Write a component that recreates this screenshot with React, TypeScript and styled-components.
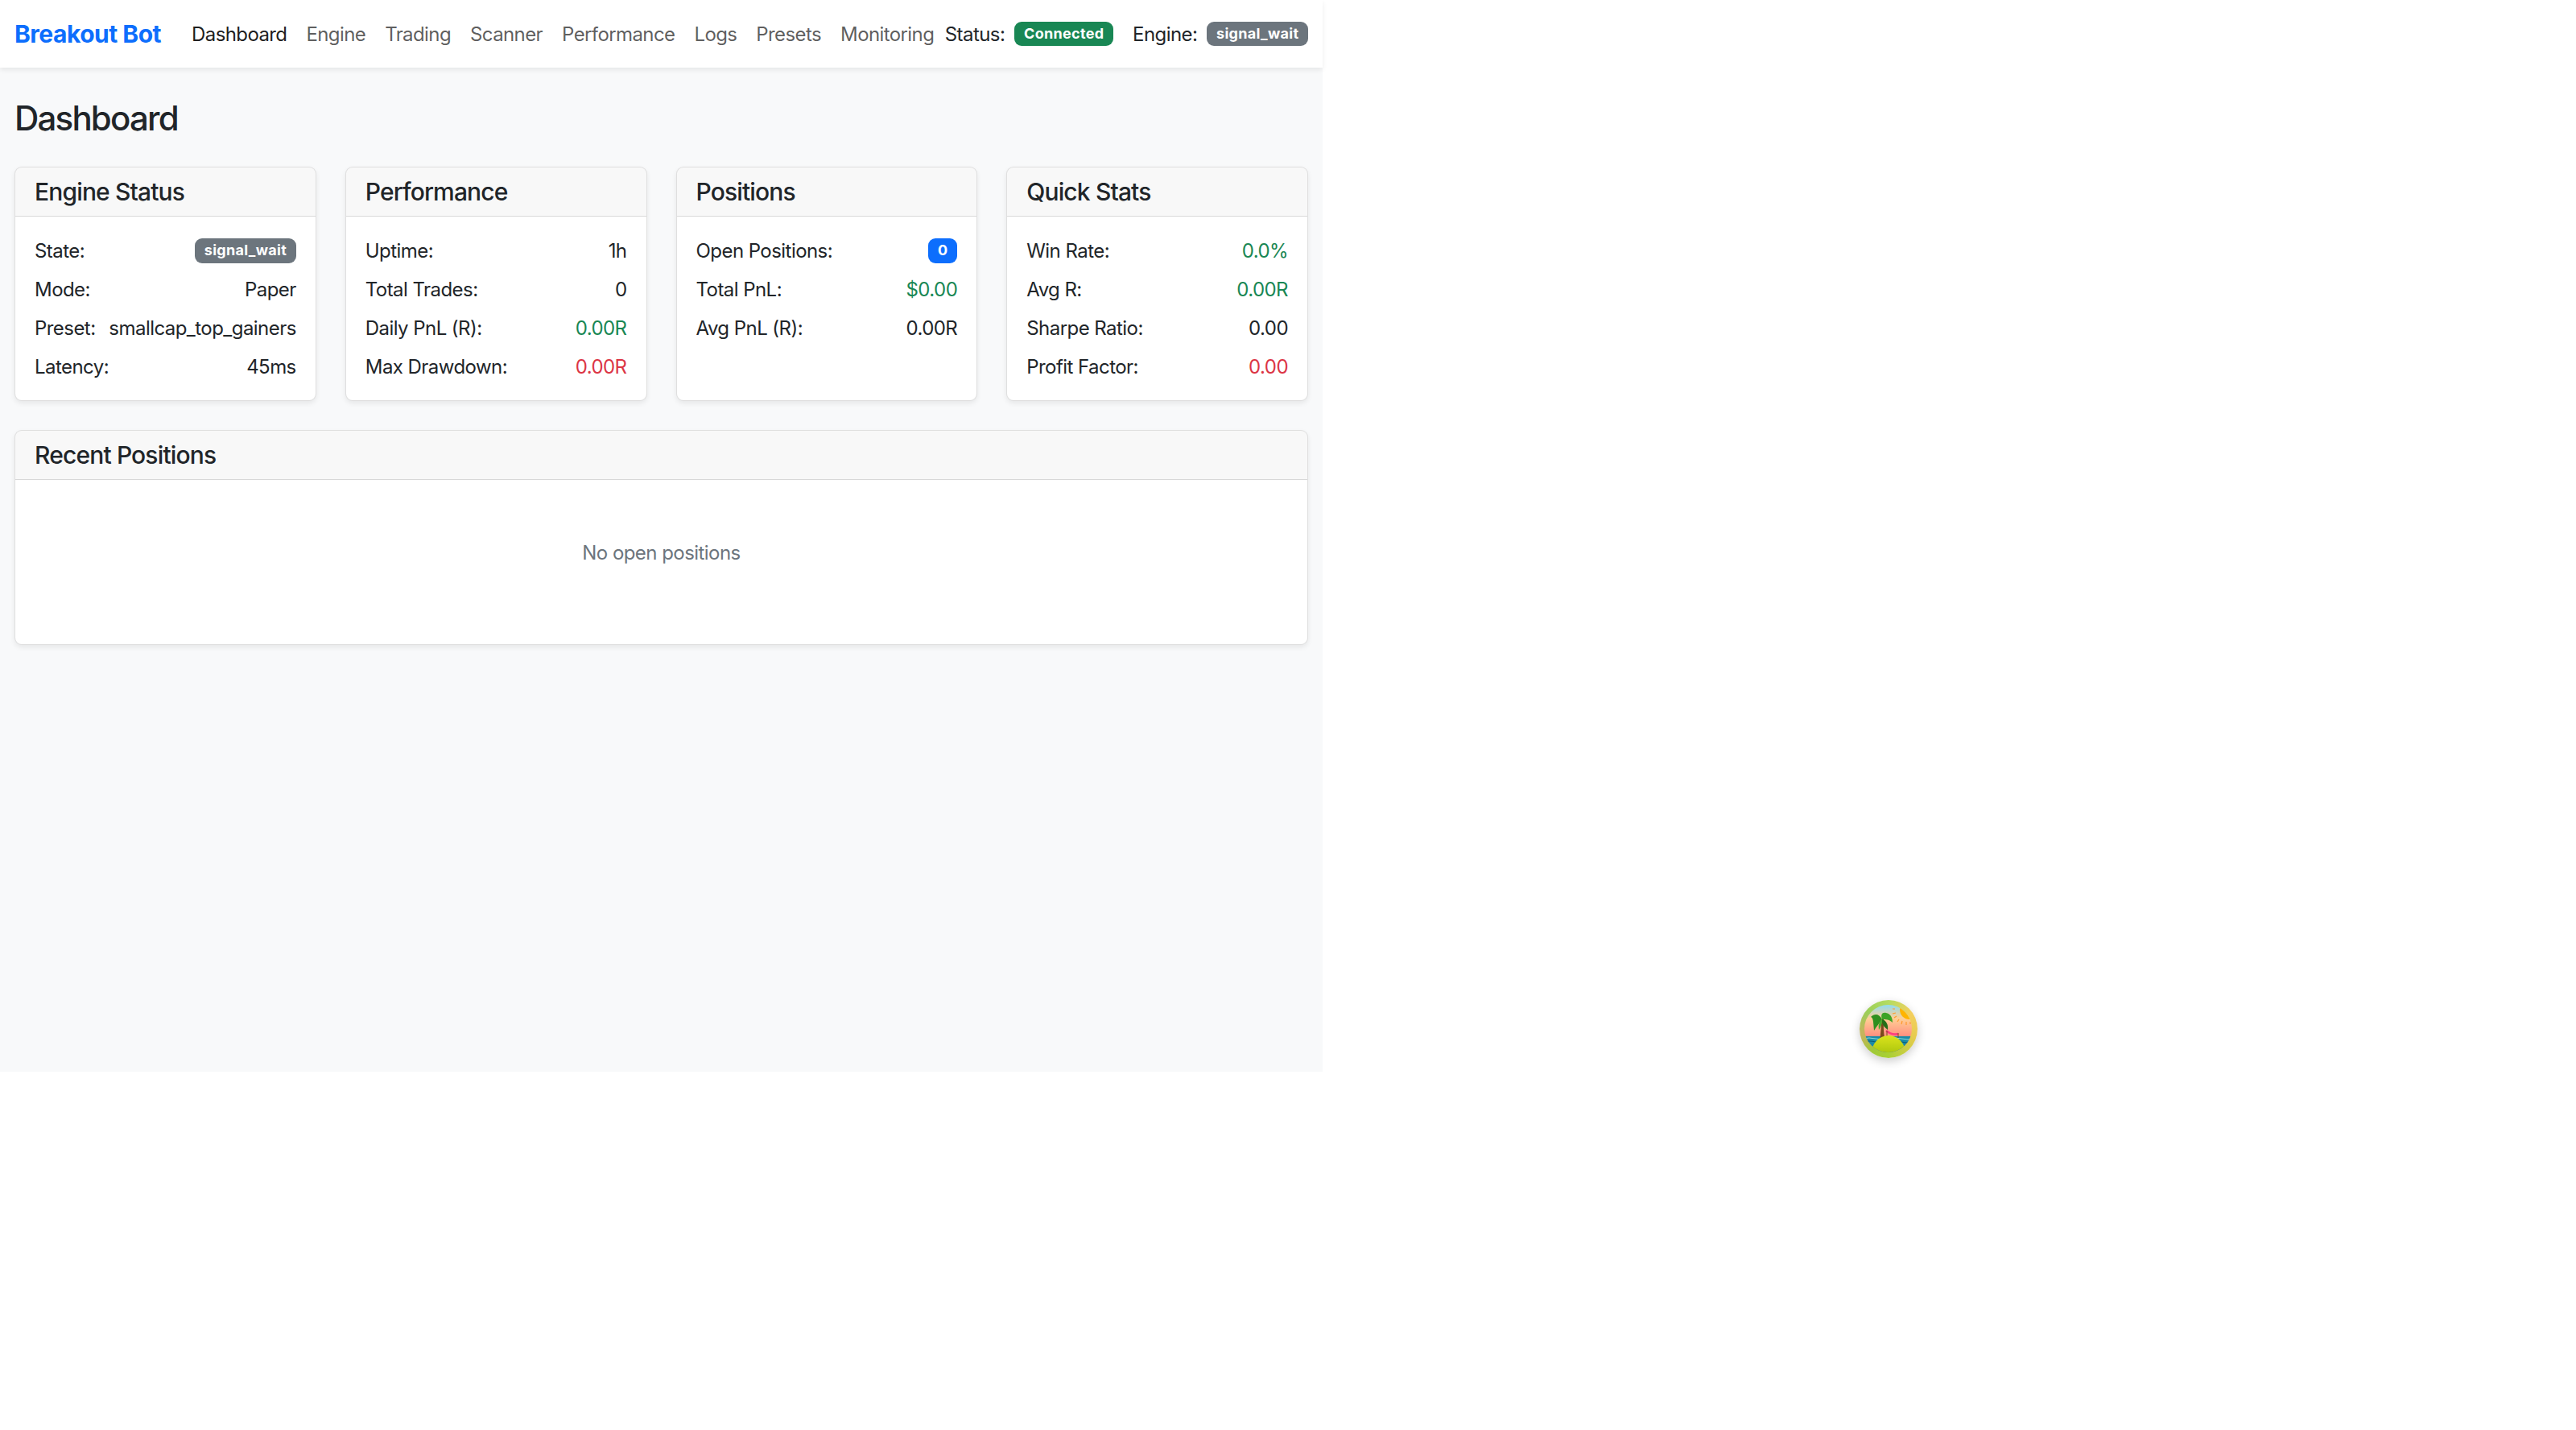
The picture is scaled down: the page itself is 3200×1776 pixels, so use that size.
import styled, { createGlobalStyle } from "styled-components";

const GlobalStyle = createGlobalStyle`
  html, body {
    margin: 0;
    padding: 0;
    background: #ffffff;
  }
  body {
    font-family: Inter, "Liberation Sans", sans-serif;
    font-size: 24px;
    line-height: 36px;
    letter-spacing: -0.55px;
    color: #212529;
  }
  * {
    box-sizing: border-box;
  }
`;

const Page = styled.div`
  width: 1643px;
  min-height: 1331px;
  background-color: #f8f9fa;
`;

const TopBar = styled.nav`
  height: 84px;
  display: flex;
  align-items: center;
  padding: 0 18px;
  background-color: #ffffff;
  box-shadow: 0 3px 6px rgba(0, 0, 0, 0.075);
`;

const Brand = styled.a`
  font-size: 30px;
  font-weight: 700;
  letter-spacing: -0.5px;
  color: #0d6efd;
  margin-right: 26px;
  white-space: nowrap;
`;

const NavLinks = styled.div`
  display: flex;
`;

const NavLink = styled.a<{ $active?: boolean }>`
  padding: 2px 12px 0;
  letter-spacing: -0.6px;
  white-space: nowrap;
  color: ${(p) => (p.$active ? "rgba(0, 0, 0, 0.9)" : "rgba(0, 0, 0, 0.65)")};
`;

const StatusArea = styled.div`
  margin-left: auto;
  display: flex;
  align-items: center;
`;

const StatusLabel = styled.span<{ $first?: boolean }>`
  padding-top: 2px;
  margin-right: 12px;
  margin-left: ${(p) => (p.$first ? "0" : "24px")};
  white-space: nowrap;
`;

const Badge = styled.span<{ $bg: string }>`
  display: inline-block;
  padding: 6.3px 11.7px;
  font-size: 18px;
  font-weight: 700;
  line-height: 18px;
  letter-spacing: 0.3px;
  color: #ffffff;
  white-space: nowrap;
  border-radius: 9px;
  background-color: ${(p) => p.$bg};
`;

const Main = styled.main`
  padding: 38px 18px 36px;
`;

const Title = styled.h3`
  margin: 0 0 35px;
  font-size: 42px;
  font-weight: 500;
  line-height: 50.4px;
  letter-spacing: -1.8px;
`;

const CardGrid = styled.div`
  display: grid;
  grid-template-columns: repeat(4, 1fr);
  gap: 36px;
  margin-bottom: 36px;
`;

const Card = styled.section`
  display: flex;
  flex-direction: column;
  background-color: #ffffff;
  border: 1.5px solid rgba(0, 0, 0, 0.125);
  border-radius: 9px;
  box-shadow: 0 3px 6px rgba(0, 0, 0, 0.075);
`;

const CardHeader = styled.h5`
  margin: 0;
  padding: 12px 24px;
  font-size: 30px;
  font-weight: 500;
  line-height: 36px;
  letter-spacing: -0.85px;
  background-color: rgba(33, 37, 41, 0.03);
  border-bottom: 1.5px solid rgba(0, 0, 0, 0.125);
  border-radius: 7.5px 7.5px 0 0;
`;

const CardBody = styled.div`
  flex: 1;
  padding: 24px;
  display: flex;
  flex-direction: column;
  gap: 12px;
`;

const Row = styled.div`
  display: flex;
  justify-content: space-between;
  align-items: center;
  height: 36px;
  white-space: nowrap;
`;

const Label = styled.span`
  padding-top: 2px;
`;

const Value = styled.span<{ $tone?: "success" | "danger" }>`
  padding-top: 2px;
  color: ${(p) =>
    p.$tone === "success" ? "#198754" : p.$tone === "danger" ? "#dc3545" : "inherit"};
`;

const EmptyText = styled.div`
  padding: 73px 24px 95px;
  text-align: center;
  color: #6c757d;
`;

const FloatingLogo = styled.div`
  position: fixed;
  left: 2310px;
  top: 1242px;
  width: 72px;
  height: 72px;
  border-radius: 50%;
  background: conic-gradient(
    #b4dc62,
    #f4cf5e 15%,
    #e6cb4e 30%,
    #a9d034 50%,
    #a0c938 60%,
    #c7b35e 72%,
    #9bcf58 86%,
    #b4dc62
  );
  box-shadow: 0 4px 12px rgba(0, 0, 0, 0.2);
`;

function IslandLogo() {
  return (
    <svg width="72" height="72" viewBox="0 0 72 72">
      <defs>
        <linearGradient id="sky" x1="0" y1="0" x2="0" y2="1">
          <stop offset="0.08" stopColor="#8fdcf0" />
          <stop offset="0.32" stopColor="#ffcf94" />
          <stop offset="0.62" stopColor="#ff9080" />
        </linearGradient>
        <linearGradient id="hill" x1="0" y1="0" x2="0" y2="1">
          <stop offset="0" stopColor="#dbe31c" />
          <stop offset="0.55" stopColor="#a8c40c" />
          <stop offset="1" stopColor="#3f8f0a" />
        </linearGradient>
        <clipPath id="inner">
          <circle cx="35.5" cy="35.5" r="29.5" />
        </clipPath>
      </defs>
      <g clipPath="url(#inner)">
        <rect x="0" y="0" width="72" height="72" fill="url(#sky)" />
        <circle cx="62" cy="12" r="12" fill="#ffb400" />
        <g stroke="#ff9a2e" strokeWidth="1.2">
          <path d="M44 11h-3M45 16l-4 1M46 20l-3 2M49 24l-2 3M53 26l-1 4M58 27v4M63 27v3" />
        </g>
        <rect x="0" y="45" width="72" height="27" fill="#1a8ba6" />
        <path d="M4 48q8-2 16 0t16 0 16 0 16 0" fill="none" stroke="#8fdcdc" strokeWidth="1" />
        <path d="M4 52q8-2 16 0t16 0 16 0 16 0" fill="none" stroke="#0c5a78" strokeWidth="1.2" />
        <path d="M25.5 47 C26.5 38 27 31 27.5 24 L30 24 C29.5 32 30 40 31 47 Z" fill="#7a4a1c" />
        <path d="M28 24 C24 16 18 17 14 21 C17 22 17 26 18 38 C21 33 25 28 28 24 Z" fill="#2f8f1f" />
        <path d="M28 24 C26 18 28 15 33 16 C38 17 41 21 41 28 C37 24 33 24 28 24 Z" fill="#3da326" />
        <path d="M28 24 C32 25 36 29 35 37 C31 34 27 30 28 24 Z" fill="#256f18" />
        <path d="M28 24 C24 27 23 31 24 37 C27 33 28 29 28 24 Z" fill="#46ad2c" />
        <path d="M33 38 Q40 44 48 42" stroke="#ff3d7f" strokeWidth="2.5" fill="none" />
        <path d="M34 38v8M48 41v6" stroke="#7a4a1c" strokeWidth="1" />
        <ellipse cx="36" cy="66" rx="21" ry="22" fill="url(#hill)" />
      </g>
    </svg>
  );
}

export default function App() {
  return (
    <Page>
      <GlobalStyle />
      <TopBar>
        <Brand>Breakout Bot</Brand>
        <NavLinks>
          <NavLink $active>Dashboard</NavLink>
          <NavLink>Engine</NavLink>
          <NavLink>Trading</NavLink>
          <NavLink>Scanner</NavLink>
          <NavLink>Performance</NavLink>
          <NavLink>Logs</NavLink>
          <NavLink>Presets</NavLink>
          <NavLink>Monitoring</NavLink>
        </NavLinks>
        <StatusArea>
          <StatusLabel $first>Status:</StatusLabel>
          <Badge $bg="#198754">Connected</Badge>
          <StatusLabel>Engine:</StatusLabel>
          <Badge $bg="#6c757d">signal_wait</Badge>
        </StatusArea>
      </TopBar>
      <Main>
        <Title>Dashboard</Title>
        <CardGrid>
          <Card>
            <CardHeader>Engine Status</CardHeader>
            <CardBody>
              <Row>
                <Label>State:</Label>
                <Badge $bg="#6c757d">signal_wait</Badge>
              </Row>
              <Row>
                <Label>Mode:</Label>
                <Value>Paper</Value>
              </Row>
              <Row>
                <Label>Preset:</Label>
                <Value>smallcap_top_gainers</Value>
              </Row>
              <Row>
                <Label>Latency:</Label>
                <Value>45ms</Value>
              </Row>
            </CardBody>
          </Card>
          <Card>
            <CardHeader>Performance</CardHeader>
            <CardBody>
              <Row>
                <Label>Uptime:</Label>
                <Value>1h</Value>
              </Row>
              <Row>
                <Label>Total Trades:</Label>
                <Value>0</Value>
              </Row>
              <Row>
                <Label>Daily PnL (R):</Label>
                <Value $tone="success">0.00R</Value>
              </Row>
              <Row>
                <Label>Max Drawdown:</Label>
                <Value $tone="danger">0.00R</Value>
              </Row>
            </CardBody>
          </Card>
          <Card>
            <CardHeader>Positions</CardHeader>
            <CardBody>
              <Row>
                <Label>Open Positions:</Label>
                <Badge $bg="#0d6efd">0</Badge>
              </Row>
              <Row>
                <Label>Total PnL:</Label>
                <Value $tone="success">$0.00</Value>
              </Row>
              <Row>
                <Label>Avg PnL (R):</Label>
                <Value>0.00R</Value>
              </Row>
            </CardBody>
          </Card>
          <Card>
            <CardHeader>Quick Stats</CardHeader>
            <CardBody>
              <Row>
                <Label>Win Rate:</Label>
                <Value $tone="success">0.0%</Value>
              </Row>
              <Row>
                <Label>Avg R:</Label>
                <Value $tone="success">0.00R</Value>
              </Row>
              <Row>
                <Label>Sharpe Ratio:</Label>
                <Value>0.00</Value>
              </Row>
              <Row>
                <Label>Profit Factor:</Label>
                <Value $tone="danger">0.00</Value>
              </Row>
            </CardBody>
          </Card>
        </CardGrid>
        <Card>
          <CardHeader>Recent Positions</CardHeader>
          <EmptyText>No open positions</EmptyText>
        </Card>
      </Main>
      <FloatingLogo>
        <IslandLogo />
      </FloatingLogo>
    </Page>
  );
}
